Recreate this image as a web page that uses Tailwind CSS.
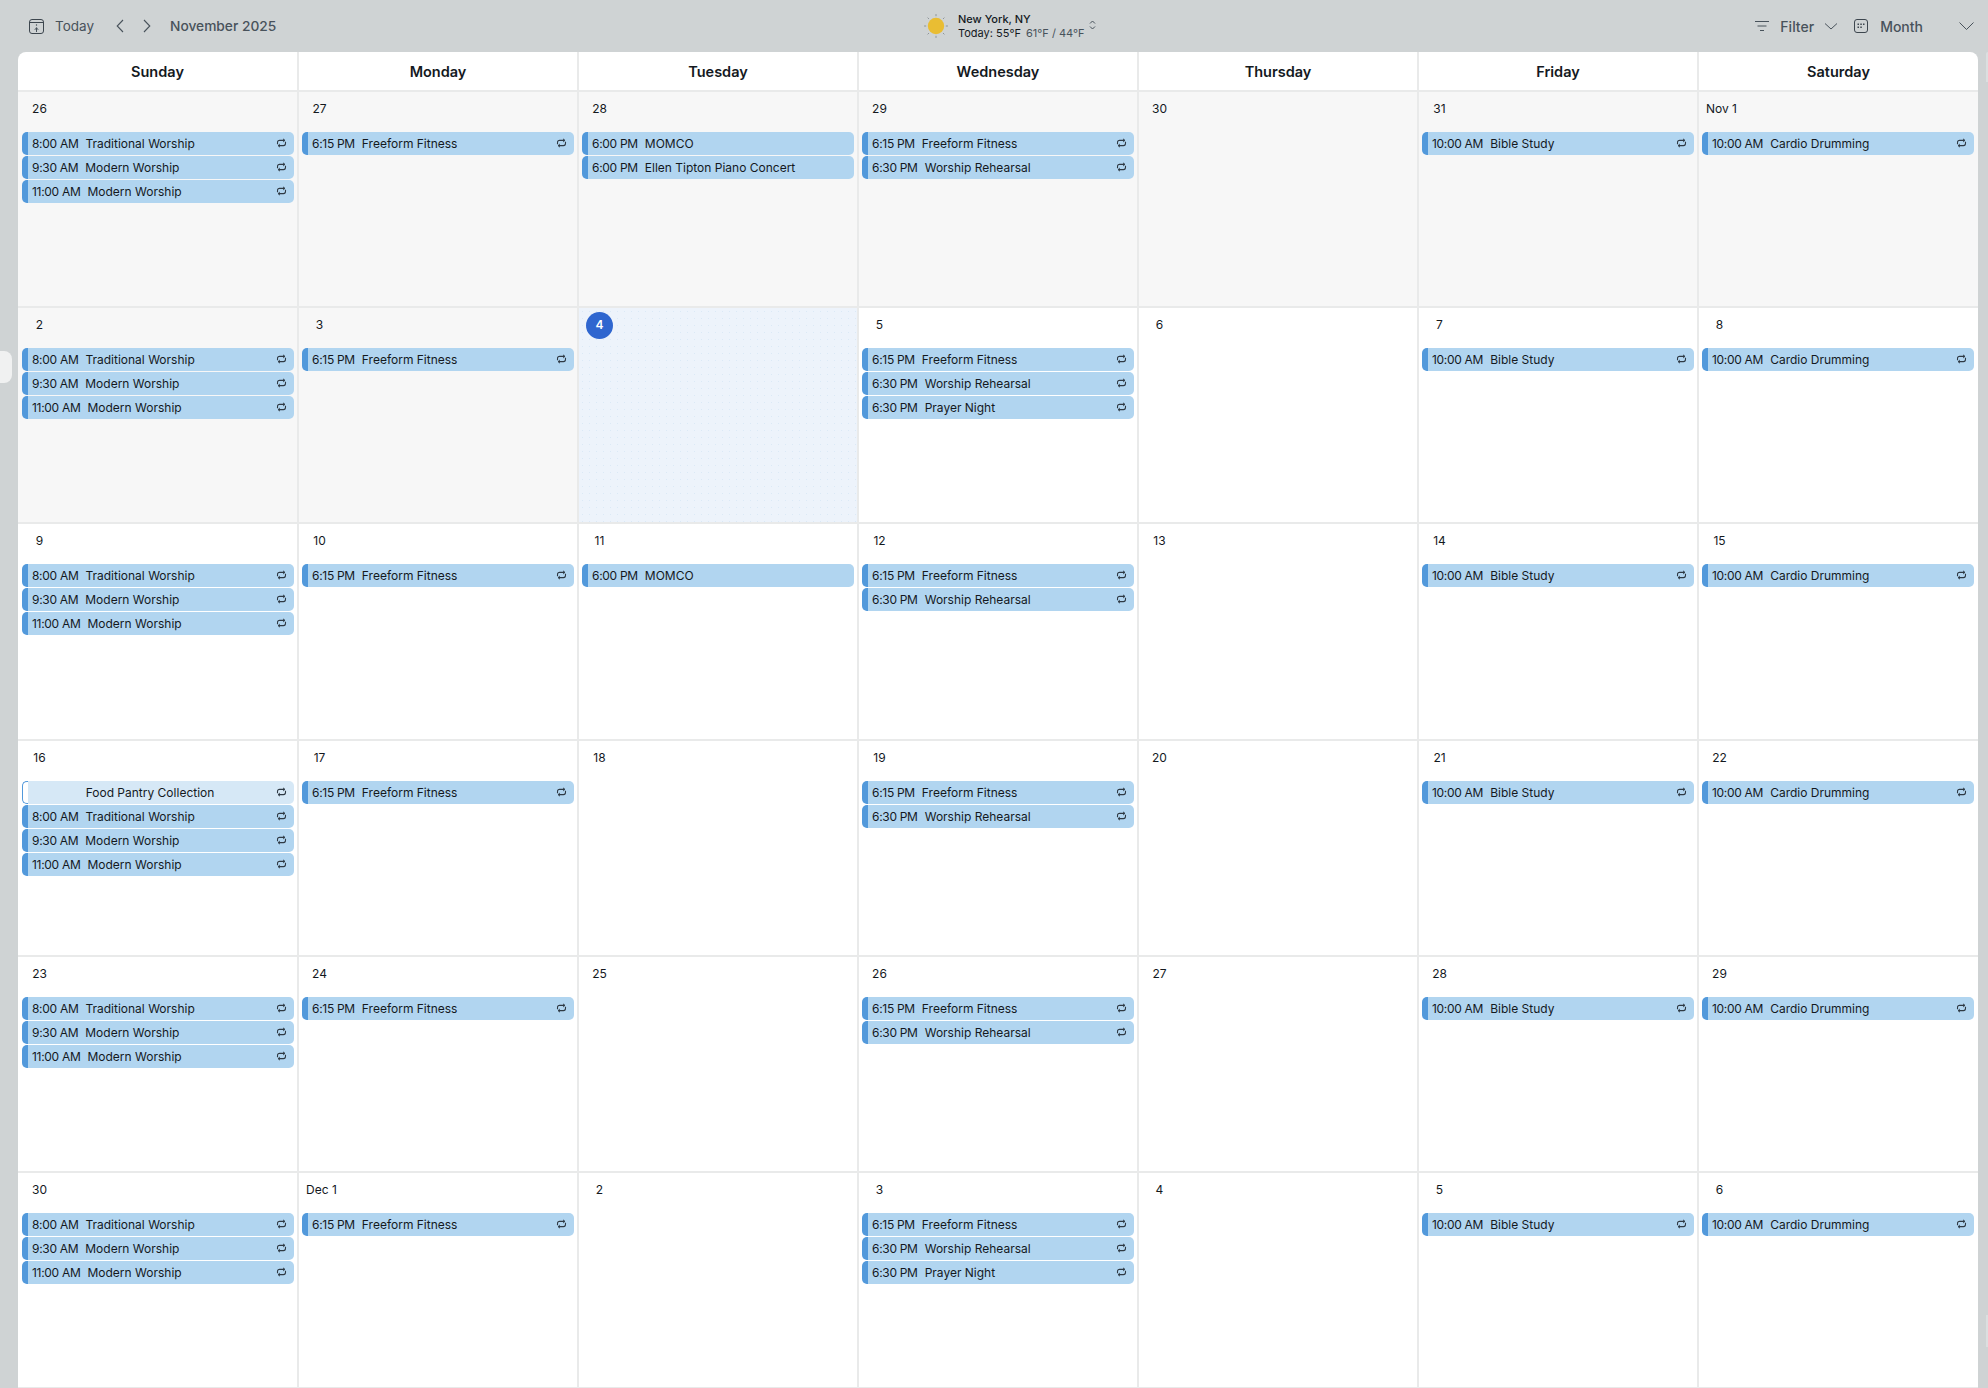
<!DOCTYPE html>
<html lang="en">
<head>
    <meta charset="UTF-8">
    <meta name="viewport" content="width=device-width, initial-scale=1.0">
    <title>Calendar</title>
    <script src="https://cdn.jsdelivr.net/npm/@tailwindcss/browser@4"></script>
</head>
<body class="relative h-screen overflow-hidden bg-[#cfd3d4] font-['Inter',sans-serif] text-[#14191e]">
    <!-- slivers of the neighbouring panels -->
    <div class="absolute left-0 top-[351px] h-[32px] w-[12px] rounded-r-lg bg-[#f0f1f1]"></div>
    <div class="absolute right-0 top-[52px] h-[30px] w-[2px] rounded-tl bg-[#dcdfe0]"></div>
    <div class="absolute right-0 top-[1315px] h-[32px] w-[2px] bg-[#dcdfe0]"></div>

    <header class="relative h-[52px] text-[#48525b]">
        <div class="flex h-full items-center pl-[29px]">
            <svg class="h-[15px] w-[15px]" viewBox="0 0 15 15" fill="none" stroke="#3d464e" stroke-width="1">
                <rect x="0.5" y="0.5" width="14" height="14" rx="2.5"/>
                <path d="M0.5 3.5H14.5"/>
                <path d="M7.5 8.5V13M5.8 10.8L7.5 8.8L9.2 10.8" stroke="#48525b"/>
                <circle cx="7.5" cy="6" r="0.7" fill="#3d464e" stroke="none"/>
            </svg>
            <span class="ml-[11px] pt-px text-[13.5px]">Today</span>
            <svg class="ml-[22px] h-[14px] w-[8px]" viewBox="0 0 8 14" fill="none" stroke="#48525b" stroke-width="1.1"><path d="M7 1L1.2 7L7 13"/></svg>
            <svg class="ml-[19px] h-[14px] w-[8px]" viewBox="0 0 8 14" fill="none" stroke="#48525b" stroke-width="1.1"><path d="M1 1L6.8 7L1 13"/></svg>
            <span class="ml-[19px] text-[13.75px] font-medium">November 2025</span>
        </div>

        <div class="absolute left-[923px] top-0 flex h-full items-center">
            <svg class="h-[26px] w-[26px]" viewBox="0 0 26 26">
                <circle cx="13" cy="13" r="8.2" fill="#e9bd33"/>
                <g stroke="#8d9498" stroke-width="1" stroke-linecap="round">
                    <path d="M13 1.5V2.8M13 23.2V24.5M1.5 13H2.8M23.2 13H24.5M4.9 4.9L5.7 5.7M20.3 20.3L21.1 21.1M4.9 21.1L5.7 20.3M20.3 5.7L21.1 4.9"/>
                </g>
            </svg>
            <div class="ml-[9px] text-[11px] leading-[14px] text-[#14191e]">
                <div class="font-medium">New York, NY</div>
                <div>Today: 55°F <span class="ml-[2px] text-[#48525b]">61°F / 44°F</span></div>
            </div>
            <svg class="mb-[2px] ml-[5px] h-[10px] w-[7px]" viewBox="0 0 7 10" fill="none" stroke="#48525b" stroke-width="1"><path d="M1 3.5L3.5 1L6 3.5M1 6.5L3.5 9L6 6.5"/></svg>
        </div>

        <div class="absolute right-0 top-0 flex h-full items-center">
            <svg class="h-[12px] w-[14px]" viewBox="0 0 14 12" fill="none" stroke="#48525b" stroke-width="1"><path d="M0 1.5H14M2.5 6H11.5M5 10.5H9"/></svg>
            <span class="ml-[11px] text-[14px] font-medium">Filter</span>
            <svg class="ml-[10px] h-[7px] w-[14px]" viewBox="0 0 14 7" fill="none" stroke="#48525b" stroke-width="1"><path d="M1 0.5L7 6L13 0.5"/></svg>
            <svg class="ml-[16px] h-[14px] w-[14px]" viewBox="0 0 14 14" fill="none" stroke="#3d464e" stroke-width="1">
                <rect x="0.5" y="0.5" width="13" height="13" rx="2.5"/>
                <g fill="#3d464e" stroke="none">
                    <rect x="3.5" y="4.5" width="1.5" height="1.5"/><rect x="6.3" y="4.5" width="1.5" height="1.5"/><rect x="9" y="4.5" width="1.5" height="1.5"/>
                    <rect x="3.5" y="7.5" width="1.5" height="1.5"/><rect x="6.3" y="7.5" width="1.5" height="1.5"/>
                </g>
            </svg>
            <span class="ml-[12px] text-[14px] font-medium">Month</span>
            <svg class="ml-[36px] mr-[14px] h-[8px] w-[15px]" viewBox="0 0 15 8" fill="none" stroke="#48525b" stroke-width="1"><path d="M0.5 0.5L7.5 7.5L14.5 0.5"/></svg>
        </div>
    </header>

    <main class="ml-[18px] w-[1960px] overflow-hidden rounded-t-lg bg-white">
        <div id="days" class="grid h-[40px] grid-cols-[281px_repeat(5,280px)_279px] border-b-2 border-[#e9eaea]"></div>
        <div id="grid" class="grid grid-cols-[281px_repeat(5,280px)_279px] grid-rows-[216px_216px_217px_216px_216px_215px]"></div>
    </main>

    <script>
        const dayNames = ['Sunday', 'Monday', 'Tuesday', 'Wednesday', 'Thursday', 'Friday', 'Saturday'];

        const sunday = [['8:00 AM', 'Traditional Worship'], ['9:30 AM', 'Modern Worship'], ['11:00 AM', 'Modern Worship']];
        const monday = [['6:15 PM', 'Freeform Fitness']];
        const wed = [['6:15 PM', 'Freeform Fitness'], ['6:30 PM', 'Worship Rehearsal']];
        const wedPrayer = [...wed, ['6:30 PM', 'Prayer Night']];
        const friday = [['10:00 AM', 'Bible Study']];
        const saturday = [['10:00 AM', 'Cardio Drumming']];
        const pantry = [['', 'Food Pantry Collection'], ...sunday];

        // one entry per row: dates for the week, then the events of the days that differ
        const weeks = [
            { dates: ['26', '27', '28', '29', '30', '31', 'Nov 1'], tue: [['6:00 PM', 'MOMCO', true], ['6:00 PM', 'Ellen Tipton Piano Concert', true]], wed: wed },
            { dates: ['2', '3', '4', '5', '6', '7', '8'], tue: [], wed: wedPrayer },
            { dates: ['9', '10', '11', '12', '13', '14', '15'], tue: [['6:00 PM', 'MOMCO', true]], wed: wed },
            { dates: ['16', '17', '18', '19', '20', '21', '22'], tue: [], wed: wed, sun: pantry },
            { dates: ['23', '24', '25', '26', '27', '28', '29'], tue: [], wed: wed },
            { dates: ['30', 'Dec 1', '2', '3', '4', '5', '6'], tue: [], wed: wedPrayer }
        ];

        const repeatIcon = `<svg class="absolute right-[7px] top-[6px] h-[10px] w-[11px]" viewBox="0 0 11 10" fill="none" stroke="#2f3a44" stroke-width="1.1">
            <path d="M1.5 6.2V4.4a2 2 0 0 1 2-2H8.6"/><path d="M7.2 0.8L9 2.4L7.2 4" fill="#2f3a44" stroke-width="0.6"/>
            <path d="M9.5 3.8V5.6a2 2 0 0 1-2 2H2.4"/><path d="M3.8 6L2 7.6L3.8 9.2" fill="#2f3a44" stroke-width="0.6"/>
        </svg>`;

        function eventHtml(ev) {
            const [time, title, single] = ev;
            const icon = single ? '' : repeatIcon;
            if (!time) {
                return `<div class="relative mb-px flex h-[23px] w-[272px] items-center justify-center rounded-[5px] bg-[#d6e8f6] bg-[radial-gradient(circle,#cbe2f4_0.5px,transparent_0.6px)] bg-[length:6px_6px] pr-[16px] pt-px text-[12px]">
                    <span class="absolute bottom-0 left-0 top-0 w-[6px] rounded-l-[5px] border border-r-0 border-[#5299db] bg-white"></span>${title}${icon}</div>`;
            }
            return `<div class="relative mb-px flex h-[23px] w-[272px] items-center overflow-hidden rounded-[5px] border-l-[6px] border-[#5299db] bg-[#b1d5f0] bg-[radial-gradient(circle,#a9d0ee_0.5px,transparent_0.6px)] bg-[length:6px_6px] pl-[4px] pt-px text-[12px]">
                <span class="tracking-[-0.3px]">${time}</span><span class="ml-[7px]">${title}</span>${icon}</div>`;
        }

        function cellEvents(week, col) {
            if (col === 0) return week.sun || sunday;
            if (col === 1) return monday;
            if (col === 2) return week.tue;
            if (col === 3) return week.wed;
            if (col === 5) return friday;
            if (col === 6) return saturday;
            return [];
        }

        document.getElementById('days').innerHTML = dayNames.map((name, i) =>
            `<div class="flex items-center justify-center pt-[2px] text-[14.5px] font-semibold ${i < 6 ? 'border-r-2 border-[#e9eaea]' : ''}">${name}</div>`
        ).join('');

        let cells = '';
        weeks.forEach((week, row) => {
            week.dates.forEach((date, col) => {
                const isToday = row === 1 && col === 2;
                const isPast = row === 0 || (row === 1 && col < 2);
                let cls = 'overflow-hidden pr-0 pt-[3px] ';
                cls += col === 0 ? 'pl-[4px] ' : 'pl-[3px] ';
                if (col < 6) cls += 'border-r-2 border-[#e9eaea] ';
                cls += row === 5 ? 'border-b ' : 'border-b-2 ';
                cls += 'border-b-[#e9eaea] ';
                if (isToday) cls += 'bg-[#edf3fb] bg-[radial-gradient(circle,#dbe9f6_0.5px,transparent_0.6px)] bg-[length:7px_7px] ';
                else if (isPast) cls += 'bg-[#f7f7f7] ';

                const badge = isToday
                    ? 'ml-[4px] inline-flex h-[27px] w-[27px] items-center justify-center rounded-full bg-[#2f66cf] text-[12px] font-semibold text-white'
                    : 'ml-[4px] inline-flex h-[27px] min-w-[27px] items-center justify-center text-[12px]';

                cells += `<div class="${cls}">
                    <div class="mb-[10px] h-[27px]"><span class="${badge}">${date}</span></div>
                    ${cellEvents(week, col).map(eventHtml).join('')}
                </div>`;
            });
        });
        document.getElementById('grid').innerHTML = cells;
    </script>
</body>
</html>
